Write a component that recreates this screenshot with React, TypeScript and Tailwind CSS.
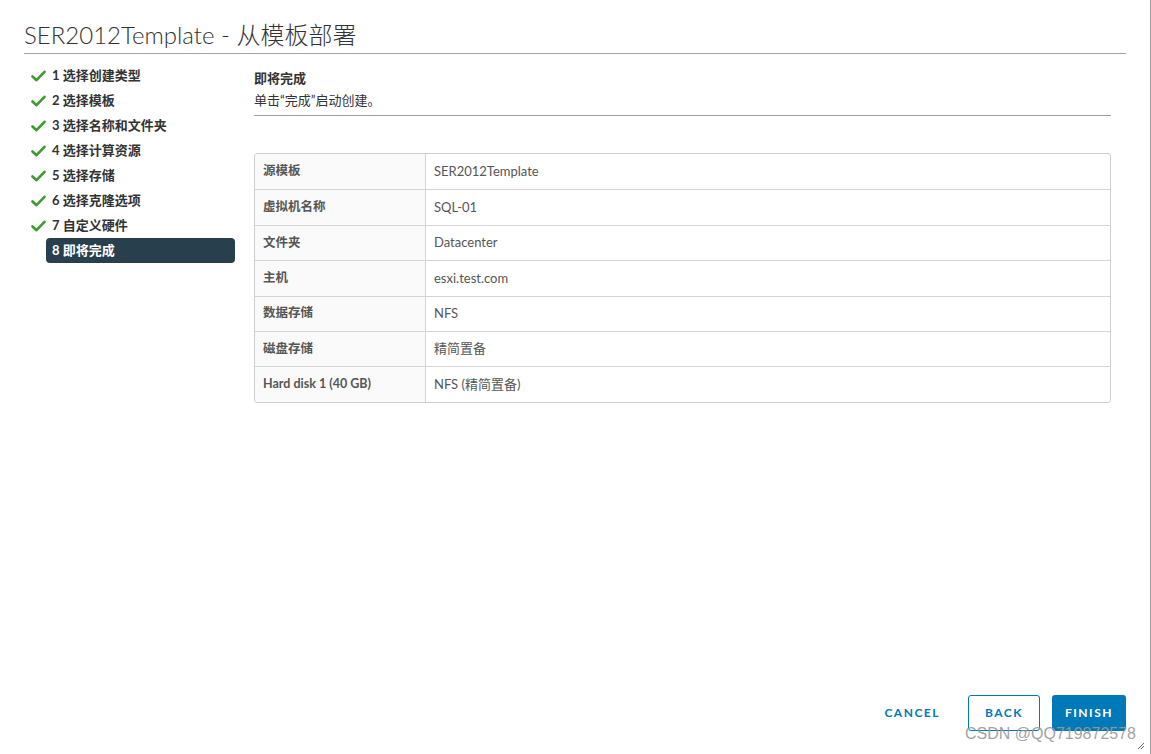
const steps = [
  "1 选择创建类型",
  "2 选择模板",
  "3 选择名称和文件夹",
  "4 选择计算资源",
  "5 选择存储",
  "6 选择克隆选项",
  "7 自定义硬件",
];

const rows: [string, string][] = [
  ["源模板", "SER2012Template"],
  ["虚拟机名称", "SQL-01"],
  ["文件夹", "Datacenter"],
  ["主机", "esxi.test.com"],
  ["数据存储", "NFS"],
  ["磁盘存储", "精简置备"],
  ["Hard disk 1 (40 GB)", "NFS (精简置备)"],
];

const font = {
  fontFamily: '"Lato", "Noto Sans CJK SC", sans-serif',
};

const Check = () => (
  <svg width="15" height="12" viewBox="0 0 15 12" className="shrink-0">
    <path d="M1.5 6.5 L5.5 10.2 L13.5 1.8" fill="none" stroke="#3c9a2e" strokeWidth="2.6" strokeLinecap="round" strokeLinejoin="round" />
  </svg>
);

export default function App() {
  return (
    <div
      className="relative w-[1151px] h-[754px] bg-white text-[#313131] overflow-hidden border-r border-[#9a9a9a] flex flex-col"
      style={font}
    >
      {/* Header */}
      <div className="mx-[24px] mt-[20px] border-b border-[#a3a3a3] pb-[4px]">
        <h1 className="text-[24px] font-light leading-[29px] text-[#333]">SER2012Template - 从模板部署</h1>
      </div>

      <div className="flex flex-1 pl-[31px] pr-[39px]">
        {/* Steps */}
        <div className="w-[204px] pt-[9px] flex flex-col">
          {steps.map((s) => (
            <div key={s} className="h-[25px] flex items-center gap-[6px]">
              <Check />
              <span className="text-[13px] font-bold text-[#333]">{s}</span>
            </div>
          ))}
          <div className="h-[25px] ml-[15px] rounded-[4px] bg-[#28404d] flex items-center px-[6px]">
            <span className="text-[13px] font-bold text-white">8 即将完成</span>
          </div>
        </div>

        {/* Content */}
        <div className="flex-1 ml-[19px] pt-[14px]">
          <div className="text-[13px] font-bold text-[#333] leading-[20px]">即将完成</div>
          <div className="text-[13px] text-[#333] leading-[20px] mt-[2px]">单击“完成”启动创建。</div>
          <div className="border-b border-[#9e9e9e] mt-[5px]" />

          <div className="mt-[37px] border border-[#cfcfcf] rounded-[3px] overflow-hidden">
            {rows.map(([k, v], i) => (
              <div key={k} className={`flex h-[35.4px] ${i > 0 ? "border-t border-[#d4d4d4]" : ""}`}>
                <div className="w-[171px] bg-[#fafafa] border-r border-[#d4d4d4] px-[8px] flex items-center text-[12.5px] font-bold text-[#565656]">
                  {k}
                </div>
                <div className="flex-1 px-[8px] flex items-center text-[13px] text-[#565656]">{v}</div>
              </div>
            ))}
          </div>
        </div>
      </div>

      {/* Footer */}
      <div className="flex justify-end items-center gap-[12px] pr-[24px] pb-[23px]">
        <button className="h-[36px] px-[14px] text-[12px] font-bold tracking-[1.5px] text-[#0079b8]">CANCEL</button>
        <button className="h-[36px] w-[72px] ml-[2px] border border-[#0079b8] rounded-[3px] text-[12px] font-bold tracking-[1.5px] text-[#0079b8] bg-white">
          BACK
        </button>
        <button className="h-[36px] w-[74px] rounded-[3px] bg-[#0079b8] text-[12px] font-bold tracking-[1.5px] text-white">
          FINISH
        </button>
      </div>

      {/* Watermark */}
      <div
        className="absolute right-[14px] bottom-[8px] text-[16px] text-[#9a9a9a] opacity-90 pointer-events-none"
        style={{ fontFamily: '"Liberation Sans", sans-serif' }}
      >
        CSDN @QQ719872578
      </div>
      <svg className="absolute right-[5px] bottom-[4px]" width="8" height="8" viewBox="0 0 8 8">
        <path d="M1 7 L7 1 M4 7 L7 4" stroke="#666" strokeWidth="1" />
      </svg>
    </div>
  );
}
